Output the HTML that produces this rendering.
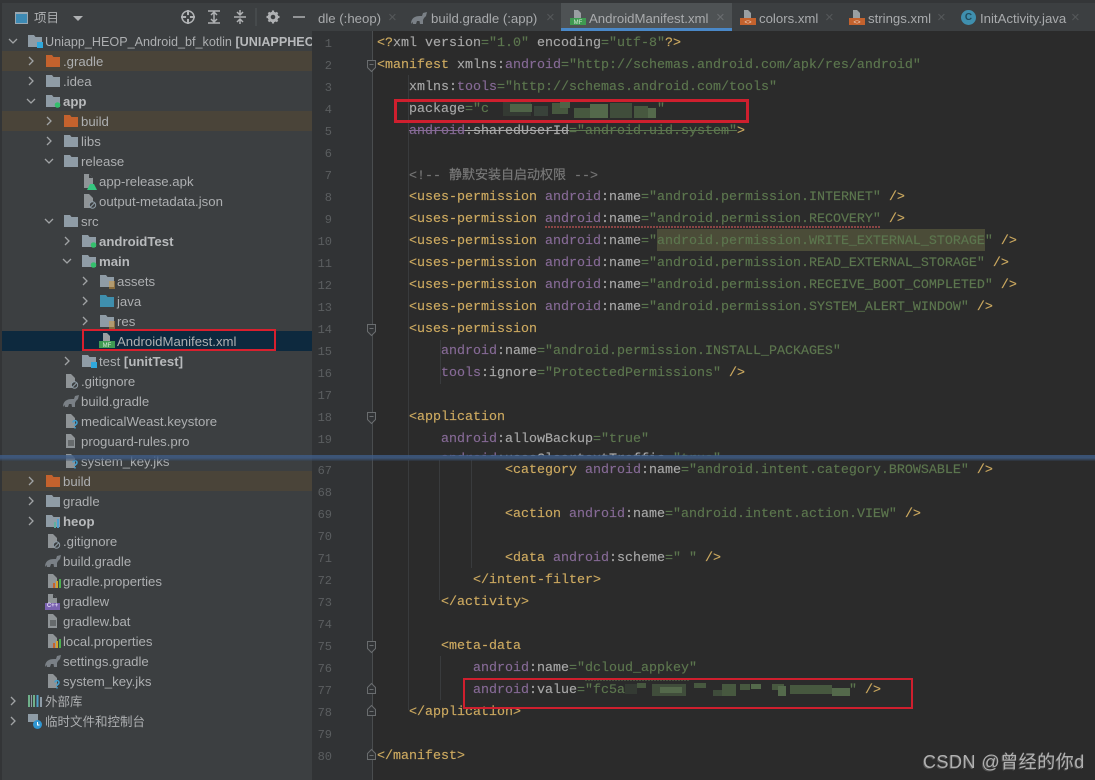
<!DOCTYPE html>
<html><head><meta charset="utf-8"><style>
html,body{margin:0;padding:0;background:#2b2b2b}
#p{position:relative;width:1095px;height:780px;overflow:hidden;background:#2b2b2b;font-family:"Liberation Sans","Noto Sans CJK SC",sans-serif}
.a{position:absolute}
.r{position:absolute;height:20px;line-height:20px;font-size:13.2px;color:#adafb1;white-space:nowrap;margin-top:1px}
.b{font-weight:bold;color:#b8babc}
.t{position:absolute;top:8px;height:20px;line-height:20px;font-size:13.2px;color:#a9abad;white-space:nowrap;margin-top:1px}
.x{position:absolute;top:8px;height:20px;line-height:20px;font-size:15px;color:#55585a}
.n{position:absolute;left:312px;width:20px;text-align:right;font:12px/22px "Liberation Mono",monospace;color:#5b5e60;height:22px;margin-top:2px}
.c{position:absolute;left:377px;height:22px;line-height:22px;font-family:"Liberation Mono","Noto Sans CJK SC",monospace;font-size:13.33px;color:#a9b7c6;white-space:pre;letter-spacing:0;margin-top:2px;-webkit-text-stroke:.15px}
.g{color:#cdaa60}.h{color:#866a96}.v{color:#5c764e}.w{color:#a8a8a8}.m{color:#757575}
.i{position:absolute;width:16px;height:16px}
.f{position:absolute;width:1px;background:#393b3d}
</style></head><body><div id="p">
<svg width="0" height="0" style="position:absolute"><defs>
<symbol id="fo" viewBox="0 0 16 16"><path d="M1 2h6l1.500 2H15v10H1z" fill="#8f9ca6"/></symbol>
<symbol id="fr" viewBox="0 0 16 16"><path d="M1 2h6l1.500 2H15v10H1z" fill="#c4622d"/></symbol>
<symbol id="fb" viewBox="0 0 16 16"><path d="M1 2h6l1.500 2H15v10H1z" fill="#3f8fae"/></symbol>
<symbol id="fg" viewBox="0 0 16 16"><path d="M1 2h6l1.500 2H15v10H1z" fill="#8f9ca6"/><circle cx="12.500" cy="12" r="2.800" fill="#34c06c"/></symbol>
<symbol id="fq" viewBox="0 0 16 16"><path d="M1 2h6l1.500 2H15v10H1z" fill="#8f9ca6"/><rect x="10" y="9" width="6" height="6" fill="#2fa8dc"/></symbol>
<symbol id="fa" viewBox="0 0 16 16"><path d="M1 2h6l1.500 2H15v10H1z" fill="#8f9ca6"/><path d="M10 9h6M10 11h6M10 13h6M10 15h6" stroke="#d49a3a" stroke-width="1"/></symbol>
<symbol id="fh" viewBox="0 0 16 16"><path d="M1 2h6l1.500 2H15v10H1z" fill="#8f9ca6"/><path d="M9 9h2v6H9z" fill="#5fb0a0"/><path d="M12 6h2v9h-2z" fill="#4fa0d0"/></symbol>
<symbol id="fl" viewBox="0 0 16 16"><path d="M3 1h5l4 4v10H3z" fill="#8f9497"/><path d="M8 1v4h4" fill="#3c3f41"/></symbol>
<symbol id="ft" viewBox="0 0 16 16"><path d="M3 1h5l4 4v10H3z" fill="#8f9497"/><path d="M5 8h6M5 10h6M5 12h6" stroke="#3c3f41"/></symbol>
<symbol id="fk" viewBox="0 0 16 16"><path d="M3 1h5l4 4v10H3z" fill="#8f9497"/><path d="M10 9.500a2 2 0 1 1 2.500 2l-.5 1v.5M12 14v1.500" stroke="#3f9fd0" stroke-width="1.500" fill="none"/></symbol>
<symbol id="fi" viewBox="0 0 16 16"><path d="M3 1h5l4 4v10H3z" fill="#8f9497"/><circle cx="11.500" cy="12" r="3.200" fill="#3c3f41" stroke="#8f9ca6"/><path d="M9.500 14l4-4" stroke="#8f9ca6"/></symbol>
<symbol id="fp" viewBox="0 0 16 16"><path d="M3 1h5l4 4v10H3z" fill="#8f9497"/><path d="M8 10h2v5H8z" fill="#c4622d"/><path d="M11 8h2v7h-2z" fill="#d4a22e"/><path d="M14 6h2v9h-2z" fill="#4caf50"/></symbol>
<symbol id="el" viewBox="0 0 16 16"><path d="M0 14c0-6 4-8 9-8h2l1-3 4-1-1 4-2 2-1 2v4h-3l-.5-3H6l-1 3H2l-.5-2z" fill="#7a8086"/></symbol>
<symbol id="mf" viewBox="0 0 16 16"><path d="M4 0h4l3 3v6H4z" fill="#9a9fa2"/><rect x="0" y="8" width="16" height="7" fill="#3f9a52"/><text x="8" y="14" font-size="6" fill="#d8e8d8" text-anchor="middle" font-family="Liberation Sans">MF</text></symbol>
<symbol id="xm" viewBox="0 0 16 16"><path d="M4 0h4l3 3v6H4z" fill="#9a9fa2"/><rect x="0" y="8" width="16" height="7" fill="#c4622d"/><text x="8" y="14" font-size="6" fill="#f0d8c8" text-anchor="middle" font-family="Liberation Sans">&lt;&gt;</text></symbol>
</defs></svg>

<!-- panels -->
<div class="a" style="left:0;top:0;width:312px;height:780px;background:#3c3f41"></div>
<div class="a" style="left:0;top:0;width:2px;height:780px;background:#333537"></div>
<div class="a" style="left:0;top:0;width:1095px;height:3px;background:#343638"></div>
<div class="a" style="left:312px;top:3px;width:783px;height:28px;background:#3c3f41"></div>
<div class="a" style="left:312px;top:31px;width:61px;height:749px;background:#313335"></div>
<div class="a" style="left:372px;top:31px;width:1px;height:749px;background:#4a4d4f"></div>
<div class="a" style="left:2px;top:51px;width:310px;height:20px;background:#4a4439"></div>
<div class="a" style="left:2px;top:111px;width:310px;height:20px;background:#4a4439"></div>
<div class="a" style="left:2px;top:471px;width:310px;height:20px;background:#4a4439"></div>
<div class="a" style="left:2px;top:331px;width:310px;height:20px;background:#0d293e"></div>

<!-- toolbar -->
<div class="a" style="left:15px;top:12px;width:11px;height:9px;border:1px solid #9aa7b0;border-top-width:2px;background:#3d8ab4"></div>
<div class="a" style="left:34px;top:8px;height:20px;line-height:20px;font-size:12.500px;color:#aeb0b2">项目</div>
<svg class="a" style="left:0;top:0" width="312" height="31" fill="none" stroke="#afb1b3" stroke-width="1.500">
<path d="M73 16h10l-5 5z" fill="#afb1b3" stroke="none"/>
<circle cx="188" cy="17" r="6"/><path d="M188 10v14M181 17h14" stroke-width="2"/><circle cx="188" cy="17" r="2" fill="#3c3f41" stroke="none"/>
<path d="M208 11h12M208 23h12M214 13v8M211 15l3-3 3 3M211 19l3 3 3-3"/>
<path d="M234 17h12M240 10v4M240 24v-4M237 12l3 3 3-3M237 22l3-3 3 3"/>
<path d="M256 8v18" stroke="#515456" stroke-width="1"/>
<circle cx="273" cy="17" r="3.800" stroke-width="3"/>
<path d="M273 10.500v13M266.500 17h13M268.500 12.500l9 9M277.500 12.500l-9 9" stroke-width="2.200" stroke-dasharray="2.200 8.600"/>
<path d="M293 17h12"/>
</svg>

<!-- tabs -->
<div class="a" style="left:561px;top:3px;width:171px;height:25px;background:#4e5254"></div>
<div class="a" style="left:561px;top:28px;width:171px;height:3px;background:#4a88c7"></div>
<div class="t" style="left:318px">dle (:heop)</div>
<div class="x" style="left:388px">×</div>
<svg class="i" style="left:411px;top:10px"><use href="#el"/></svg>
<div class="t" style="left:431px">build.gradle (:app)</div>
<div class="x" style="left:546px">×</div>
<svg class="i" style="left:570px;top:10px"><use href="#mf"/></svg>
<div class="t" style="left:589px">AndroidManifest.xml</div>
<div class="x" style="left:716px;color:#6a6d70">×</div>
<svg class="i" style="left:740px;top:10px"><use href="#xm"/></svg>
<div class="t" style="left:759px">colors.xml</div>
<div class="x" style="left:825px">×</div>
<svg class="i" style="left:849px;top:10px"><use href="#xm"/></svg>
<div class="t" style="left:868px">strings.xml</div>
<div class="x" style="left:937px">×</div>
<div class="a" style="left:961px;top:10px;width:15px;height:15px;border-radius:50%;background:#3f8fae;color:#1f4a5c;font:bold 10px/15px 'Liberation Sans',sans-serif;text-align:center">C</div>
<div class="t" style="left:980px">InitActivity.java</div>
<div class="x" style="left:1071px">×</div>

<!-- tree chevrons -->
<svg class="a" style="left:0;top:0" width="312" height="780" fill="none" stroke="#a0a3a5" stroke-width="1.300">
<path d="M9 39l4 4 4-4M29 57l4 4-4 4M29 77l4 4-4 4M27 99l4 4 4-4M47 117l4 4-4 4M47 137l4 4-4 4M45 159l4 4 4-4M45 219l4 4 4-4M65 237l4 4-4 4M63 259l4 4 4-4M83 277l4 4-4 4M83 297l4 4-4 4M83 317l4 4-4 4M65 357l4 4-4 4M29 477l4 4-4 4M29 497l4 4-4 4M29 517l4 4-4 4M11 697l4 4-4 4M11 717l4 4-4 4"/>
</svg>

<!-- tree icons -->
<svg class="i" style="left:27px;top:33px"><use href="#fq"/></svg>
<svg class="i" style="left:45px;top:53px"><use href="#fr"/></svg>
<svg class="i" style="left:45px;top:73px"><use href="#fo"/></svg>
<svg class="i" style="left:45px;top:93px"><use href="#fg"/></svg>
<svg class="i" style="left:63px;top:113px"><use href="#fr"/></svg>
<svg class="i" style="left:63px;top:133px"><use href="#fo"/></svg>
<svg class="i" style="left:63px;top:153px"><use href="#fo"/></svg>
<svg class="i" style="left:81px;top:173px"><use href="#fl"/></svg>
<svg class="a" style="left:87px;top:183px" width="10" height="7"><path d="M0 7l3-6h4l3 6z" fill="#35c67f"/></svg>
<svg class="i" style="left:81px;top:193px"><use href="#fi"/></svg>
<svg class="i" style="left:63px;top:213px"><use href="#fo"/></svg>
<svg class="i" style="left:81px;top:233px"><use href="#fg"/></svg>
<svg class="i" style="left:81px;top:253px"><use href="#fg"/></svg>
<svg class="i" style="left:99px;top:273px"><use href="#fa"/></svg>
<svg class="i" style="left:99px;top:293px"><use href="#fb"/></svg>
<svg class="i" style="left:99px;top:313px"><use href="#fa"/></svg>
<svg class="i" style="left:99px;top:333px"><use href="#mf"/></svg>
<svg class="i" style="left:81px;top:353px"><use href="#fq"/></svg>
<svg class="i" style="left:63px;top:373px"><use href="#fi"/></svg>
<svg class="i" style="left:63px;top:393px"><use href="#el"/></svg>
<svg class="i" style="left:63px;top:413px"><use href="#fk"/></svg>
<svg class="i" style="left:63px;top:433px"><use href="#ft"/></svg>
<svg class="i" style="left:63px;top:453px"><use href="#fk"/></svg>
<svg class="i" style="left:45px;top:473px"><use href="#fr"/></svg>
<svg class="i" style="left:45px;top:493px"><use href="#fo"/></svg>
<svg class="i" style="left:45px;top:513px"><use href="#fh"/></svg>
<svg class="i" style="left:45px;top:533px"><use href="#fi"/></svg>
<svg class="i" style="left:45px;top:553px"><use href="#el"/></svg>
<svg class="i" style="left:45px;top:573px"><use href="#fp"/></svg>
<svg class="i" style="left:45px;top:593px"><use href="#fl"/></svg>
<div class="a" style="left:45px;top:603px;width:15px;height:7px;background:#7a62b0;color:#dcd4f0;font:bold 6px/7px 'Liberation Sans',sans-serif;text-align:center">C++</div>
<svg class="i" style="left:45px;top:613px"><use href="#ft"/></svg>
<svg class="i" style="left:45px;top:633px"><use href="#fp"/></svg>
<svg class="i" style="left:45px;top:653px"><use href="#el"/></svg>
<svg class="i" style="left:45px;top:673px"><use href="#fk"/></svg>
<svg class="i" style="left:27px;top:693px"><path d="M1 2h2v12H1zM6 2h2v12H6z" fill="#6fb08a"/><path d="M4 2h1v12H4z" fill="#8f9ca6"/><path d="M9.500 2h2v12h-2z" fill="#4fa0c8"/><path d="M13 4h2v10h-2z" fill="#8f9ca6"/></svg>
<svg class="i" style="left:27px;top:713px"><path d="M1 1h10v8H1z" fill="#8f9ca6"/><circle cx="10.500" cy="11.500" r="4.500" fill="#2f95d0"/><path d="M10.500 9v3h2" stroke="#fff" fill="none"/></svg>

<!-- tree text -->
<div class="a" style="left:45px;top:31px;width:267px;overflow:hidden;height:22px"><div class="r" style="left:0;top:0;font-size:12.600px">Uniapp_HEOP_Android_bf_kotlin <b class="b">[UNIAPPHECP]</b></div></div>
<div class="r" style="left:63px;top:51px">.gradle</div>
<div class="r" style="left:63px;top:71px">.idea</div>
<div class="r b" style="left:63px;top:91px">app</div>
<div class="r" style="left:81px;top:111px">build</div>
<div class="r" style="left:81px;top:131px">libs</div>
<div class="r" style="left:81px;top:151px">release</div>
<div class="r" style="left:99px;top:171px">app-release.apk</div>
<div class="r" style="left:99px;top:191px">output-metadata.json</div>
<div class="r" style="left:81px;top:211px">src</div>
<div class="r b" style="left:99px;top:231px">androidTest</div>
<div class="r b" style="left:99px;top:251px">main</div>
<div class="r" style="left:117px;top:271px">assets</div>
<div class="r" style="left:117px;top:291px">java</div>
<div class="r" style="left:117px;top:311px">res</div>
<div class="r" style="left:117px;top:331px">AndroidManifest.xml</div>
<div class="r" style="left:99px;top:351px">test <b class="b">[unitTest]</b></div>
<div class="r" style="left:81px;top:371px">.gitignore</div>
<div class="r" style="left:81px;top:391px">build.gradle</div>
<div class="r" style="left:81px;top:411px">medicalWeast.keystore</div>
<div class="r" style="left:81px;top:431px">proguard-rules.pro</div>
<div class="r" style="left:81px;top:451px">system_key.jks</div>
<div class="r" style="left:63px;top:471px">build</div>
<div class="r" style="left:63px;top:491px">gradle</div>
<div class="r b" style="left:63px;top:511px">heop</div>
<div class="r" style="left:63px;top:531px">.gitignore</div>
<div class="r" style="left:63px;top:551px">build.gradle</div>
<div class="r" style="left:63px;top:571px">gradle.properties</div>
<div class="r" style="left:63px;top:591px">gradlew</div>
<div class="r" style="left:63px;top:611px">gradlew.bat</div>
<div class="r" style="left:63px;top:631px">local.properties</div>
<div class="r" style="left:63px;top:651px">settings.gradle</div>
<div class="r" style="left:63px;top:671px">system_key.jks</div>
<div class="r" style="left:45px;top:691px;font-size:12.500px">外部库</div>
<div class="r" style="left:45px;top:711px;font-size:12.500px">临时文件和控制台</div>

<!-- indent guides -->
<div class="f" style="left:408px;top:75px;height:382px"></div>
<div class="f" style="left:440px;top:340px;height:44px"></div>
<div class="f" style="left:408px;top:460px;height:250px"></div>
<div class="f" style="left:439px;top:460px;height:140px"></div>
<div class="f" style="left:471px;top:460px;height:108px"></div>
<div class="f" style="left:440px;top:656px;height:44px"></div>

<!-- line 10 highlight, spell waves -->
<div class="a" style="left:657px;top:229px;width:328px;height:22px;background:#4b4c38"></div>
<svg class="a" style="left:0;top:0" width="1095" height="780" fill="none">
<path d="M545 227h336" stroke="#8a4545" stroke-width="2" stroke-dasharray="2 1"/>
<path d="M585 679.500h104" stroke="#5f7a50" stroke-width="2" stroke-dasharray="2 1"/>
</svg>

<!-- line numbers -->
<div class="n" style="top:31px">1</div><div class="n" style="top:53px">2</div><div class="n" style="top:75px">3</div><div class="n" style="top:97px">4</div><div class="n" style="top:119px">5</div><div class="n" style="top:141px">6</div><div class="n" style="top:163px">7</div><div class="n" style="top:185px">8</div><div class="n" style="top:207px">9</div><div class="n" style="top:229px">10</div><div class="n" style="top:251px">11</div><div class="n" style="top:273px">12</div><div class="n" style="top:295px">13</div><div class="n" style="top:317px">14</div><div class="n" style="top:339px">15</div><div class="n" style="top:361px">16</div><div class="n" style="top:383px">17</div><div class="n" style="top:405px">18</div><div class="n" style="top:427px">19</div>
<div class="n" style="top:458px">67</div><div class="n" style="top:480px">68</div><div class="n" style="top:502px">69</div><div class="n" style="top:524px">70</div><div class="n" style="top:546px">71</div><div class="n" style="top:568px">72</div><div class="n" style="top:590px">73</div><div class="n" style="top:612px">74</div><div class="n" style="top:634px">75</div><div class="n" style="top:656px">76</div><div class="n" style="top:678px">77</div><div class="n" style="top:700px">78</div><div class="n" style="top:722px">79</div><div class="n" style="top:744px">80</div>

<!-- fold markers -->
<svg class="a" style="left:366px;top:0" width="12" height="780" fill="none" stroke="#6a6d6f">
<path d="M1.500 60.500h8v7l-4 4-4-4z" fill="#313335"/><path d="M3.500 64.500h4"/>
<path d="M1.500 324.500h8v7l-4 4-4-4z" fill="#313335"/><path d="M3.500 328.500h4"/>
<path d="M1.500 412.500h8v7l-4 4-4-4z" fill="#313335"/><path d="M3.500 416.500h4"/>
<path d="M1.500 641.500h8v7l-4 4-4-4z" fill="#313335"/><path d="M3.500 645.500h4"/>
<path d="M1.500 687.500l4-4 4 4v6h-8z" fill="#313335"/><path d="M3.500 689.500h4"/>
<path d="M1.500 709.500l4-4 4 4v6h-8z" fill="#313335"/><path d="M3.500 711.500h4"/>
<path d="M1.500 753.500l4-4 4 4v6h-8z" fill="#313335"/><path d="M3.500 755.500h4"/>
</svg>

<!-- code -->
<div class="c" style="top:31px"><span class="g">&lt;?</span><span class="w">xml version</span><span class="v">="1.0"</span> <span class="w">encoding</span><span class="v">="utf-8"</span><span class="g">?&gt;</span></div>
<div class="c" style="top:53px"><span class="g">&lt;manifest</span> <span class="w">xmlns:</span><span class="h">android</span><span class="v">="http://schemas.android.com/apk/res/android"</span></div>
<div class="c" style="top:75px">    <span class="w">xmlns:</span><span class="h">tools</span><span class="v">="http://schemas.android.com/tools"</span></div>
<div class="c" style="top:97px">    <span class="w">package</span><span class="v">="c</span></div>
<div class="c" style="top:119px;color:#8a8a8a">    <span class="h" style="text-decoration:line-through">android</span><span class="w" style="text-decoration:line-through">:sharedUserId</span><span class="v" style="text-decoration:line-through">="android.uid.system"</span><span class="g">&gt;</span></div>
<div class="c" style="top:163px">    <span class="m">&lt;!-- <span style="font-size:13px;color:#7a7a7a">静默安装自启动权限</span> --&gt;</span></div>
<div class="c" style="top:185px">    <span class="g">&lt;uses-permission</span> <span class="h">android</span><span class="w">:name</span><span class="v">="android.permission.INTERNET"</span> <span class="g">/&gt;</span></div>
<div class="c" style="top:207px">    <span class="g">&lt;uses-permission</span> <span class="h">android</span><span class="w">:name</span><span class="v">="android.permission.RECOVERY"</span> <span class="g">/&gt;</span></div>
<div class="c" style="top:229px">    <span class="g">&lt;uses-permission</span> <span class="h">android</span><span class="w">:name</span><span class="v">="android.permission.WRITE_EXTERNAL_STORAGE"</span> <span class="g">/&gt;</span></div>
<div class="c" style="top:251px">    <span class="g">&lt;uses-permission</span> <span class="h">android</span><span class="w">:name</span><span class="v">="android.permission.READ_EXTERNAL_STORAGE"</span> <span class="g">/&gt;</span></div>
<div class="c" style="top:273px">    <span class="g">&lt;uses-permission</span> <span class="h">android</span><span class="w">:name</span><span class="v">="android.permission.RECEIVE_BOOT_COMPLETED"</span> <span class="g">/&gt;</span></div>
<div class="c" style="top:295px">    <span class="g">&lt;uses-permission</span> <span class="h">android</span><span class="w">:name</span><span class="v">="android.permission.SYSTEM_ALERT_WINDOW"</span> <span class="g">/&gt;</span></div>
<div class="c" style="top:317px">    <span class="g">&lt;uses-permission</span></div>
<div class="c" style="top:339px">        <span class="h">android</span><span class="w">:name</span><span class="v">="android.permission.INSTALL_PACKAGES"</span></div>
<div class="c" style="top:361px">        <span class="h">tools</span><span class="w">:ignore</span><span class="v">="ProtectedPermissions"</span> <span class="g">/&gt;</span></div>
<div class="c" style="top:405px">    <span class="g">&lt;application</span></div>
<div class="c" style="top:427px">        <span class="h">android</span><span class="w">:allowBackup</span><span class="v">="true"</span></div>
<div class="c" style="top:458px">                <span class="g">&lt;category</span> <span class="h">android</span><span class="w">:name</span><span class="v">="android.intent.category.BROWSABLE"</span> <span class="g">/&gt;</span></div>
<div class="c" style="top:502px">                <span class="g">&lt;action</span> <span class="h">android</span><span class="w">:name</span><span class="v">="android.intent.action.VIEW"</span> <span class="g">/&gt;</span></div>
<div class="c" style="top:546px">                <span class="g">&lt;data</span> <span class="h">android</span><span class="w">:scheme</span><span class="v">=" "</span> <span class="g">/&gt;</span></div>
<div class="c" style="top:568px">            <span class="g">&lt;/intent-filter&gt;</span></div>
<div class="c" style="top:590px">        <span class="g">&lt;/activity&gt;</span></div>
<div class="c" style="top:634px">        <span class="g">&lt;meta-data</span></div>
<div class="c" style="top:656px">            <span class="h">android</span><span class="w">:name</span><span class="v">="dcloud_appkey"</span></div>
<div class="c" style="top:678px">            <span class="h">android</span><span class="w">:value</span><span class="v">="fc5a</span></div>
<div class="c" style="top:700px">    <span class="g">&lt;/application&gt;</span></div>
<div class="c" style="top:744px"><span class="g">&lt;/manifest&gt;</span></div>
<div class="c v" style="top:97px;left:657px">"</div>
<div class="c" style="top:678px;left:849px"><span class="v">"</span> <span class="g">/&gt;</span></div>

<!-- mosaics -->
<svg class="a" style="left:0;top:0" width="1095" height="780">
<g fill="#47583f">
<rect x="503" y="102" width="28" height="14" fill="#343a33"/><rect x="510" y="104" width="22" height="8" fill="#4f6347"/>
<rect x="534" y="106" width="14" height="10" fill="#39423a"/><rect x="552" y="103" width="16" height="11"/>
<rect x="560" y="100" width="10" height="8" fill="#4f6347"/><rect x="574" y="108" width="16" height="10"/>
<rect x="590" y="104" width="18" height="14" fill="#54694b"/><rect x="610" y="103" width="22" height="15" fill="#404d3b"/>
<rect x="634" y="106" width="14" height="12"/><rect x="648" y="108" width="8" height="10" fill="#54694b"/>
<rect x="625" y="684" width="12" height="10" fill="#343a33"/><rect x="637" y="683" width="9" height="5"/>
<rect x="652" y="684" width="34" height="12" fill="#404d3b"/><rect x="660" y="687" width="22" height="6" fill="#54694b"/>
<rect x="694" y="683" width="12" height="5"/><rect x="713" y="690" width="12" height="6" fill="#3f4c3b"/>
<rect x="722" y="684" width="14" height="12"/><rect x="740" y="684" width="10" height="6"/>
<rect x="751" y="684" width="10" height="5" fill="#54694b"/>
<rect x="772" y="684" width="12" height="6"/><rect x="778" y="686" width="8" height="10" fill="#54694b"/>
<rect x="790" y="685" width="42" height="9"/><rect x="832" y="688" width="18" height="8" fill="#54694b"/>
</g>
</svg>

<!-- splice divider -->
<div class="c" style="top:447px;height:7px;overflow:hidden;left:377px">        <span class="h">android</span><span class="w">:usesCleartextTraffic</span><span class="v">="true"</span></div>
<div class="a" style="left:0;top:455px;width:1095px;height:6px;background:linear-gradient(rgba(62,95,140,.75),rgba(62,90,130,.85) 50%,rgba(50,65,85,.25))"></div>

<!-- red boxes -->
<div class="a" style="left:394px;top:99px;width:349px;height:18px;border:3px solid #cf1f2e"></div>
<div class="a" style="left:82px;top:329px;width:190px;height:18px;border:2px solid #d8202e"></div>
<div class="a" style="left:463px;top:678px;width:446px;height:27px;border:2px solid #cf1f2e"></div>

<!-- watermark -->
<div class="a" style="left:923px;top:750px;height:24px;line-height:24px;font-size:18px;letter-spacing:.5px;color:#b0b0b0;white-space:nowrap;text-shadow:-1px 1px 0 rgba(120,120,120,.5)">CSDN @曾经的你d</div>
</div></body></html>
